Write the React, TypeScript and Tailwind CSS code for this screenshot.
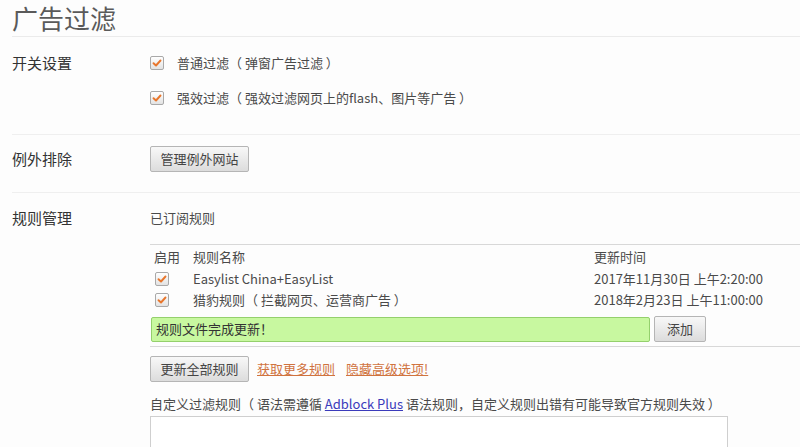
import React from "react";

const font = { fontFamily: '"Noto Sans CJK SC", "Noto Sans", sans-serif' };

function Check() {
    return (
        <span className="inline-flex w-[14px] h-[14px] shrink-0 items-center justify-center rounded-[2px] border border-[#a9a9a9] bg-gradient-to-b from-[#ffffff] to-[#e3e3e3]">
            <svg width="10" height="10" viewBox="0 0 10 10">
                <path d="M1.5 5.2 L4 7.5 L8.5 2.5" fill="none" stroke="#e8762c" strokeWidth="1.9" strokeLinecap="round" strokeLinejoin="round" />
            </svg>
        </span>
    );
}

function Btn({ children, className }: { children: React.ReactNode; className?: string }) {
    return (
        <button className={"h-[26px] rounded-[2px] border border-[#b5b5b5] bg-gradient-to-b from-[#f8f8f8] to-[#dcdcdc] text-[13px] text-[#444] " + (className || "")}>
            {children}
        </button>
    );
}

export default function App() {
    return (
        <div className="w-[800px] h-[447px] overflow-hidden bg-[#fdfdfd] pl-[12px] text-[#333]" style={font}>
            <div className="h-[37px] border-b border-[#ebebeb]">
                <h1 className="pt-[1px] text-[26px] leading-[34px] text-[#5a5a5a]">广告过滤</h1>
            </div>

            <div className="flex h-[98px] border-b border-[#efefef] pt-[13px]">
                <div className="w-[138px] text-[15px] leading-[26px]">开关设置</div>
                <div className="flex flex-col gap-[9px] text-[#4a4a4a]">
                    <label className="flex h-[26px] items-center gap-[13px] text-[13px]">
                        <Check />
                        普通过滤（ 弹窗广告过滤 ）
                    </label>
                    <label className="flex h-[26px] items-center gap-[13px] text-[13px]">
                        <Check />
                        强效过滤（ 强效过滤网页上的flash、图片等广告 ）
                    </label>
                </div>
            </div>

            <div className="flex h-[58px] border-b border-[#efefef] pt-[11px]">
                <div className="w-[138px] text-[15px] leading-[26px]">例外排除</div>
                <Btn className="w-[99px]">管理例外网站</Btn>
            </div>

            <div className="flex pt-[12px]">
                <div className="w-[138px] text-[15px] leading-[26px]">规则管理</div>
                <div className="flex-1 text-[#4a4a4a]">
                    <div className="text-[13px] leading-[26px]">已订阅规则</div>
                    <div className="mt-[13px] border-y border-[#d8d8d8] pb-[4px]">
                        <div className="flex h-[22px] items-center pl-[4px] text-[13px] mt-[1px]">
                            <span className="w-[39px]">启用</span>
                            <span className="w-[401px]">规则名称</span>
                            <span>更新时间</span>
                        </div>
                        <div className="flex h-[21px] items-center pl-[5px] text-[13px]">
                            <span className="w-[38px]"><Check /></span>
                            <span className="w-[401px]">Easylist China+EasyList</span>
                            <span>2017年11月30日 上午2:20:00</span>
                        </div>
                        <div className="flex h-[21px] items-center pl-[5px] text-[13px]">
                            <span className="w-[38px]"><Check /></span>
                            <span className="w-[401px]">猎豹规则（ 拦截网页、运营商广告 ）</span>
                            <span>2018年2月23日 上午11:00:00</span>
                        </div>
                        <div className="mt-[6px] flex items-center gap-[4px] pl-[1px]">
                            <div className="flex h-[25px] w-[499px] items-center rounded-[2px] border border-[#94d06c] bg-[#c8f8a0] pl-[4px] text-[13px] text-[#333]">
                                规则文件完成更新！
                            </div>
                            <Btn className="w-[52px]">添加</Btn>
                        </div>
                    </div>
                    <div className="mt-[9px] flex items-center gap-[8px] text-[13px]">
                        <Btn className="w-[99px]">更新全部规则</Btn>
                        <a className="text-[#d0733f] underline">获取更多规则</a>
                        <a className="ml-[3px] text-[#d0733f] underline">隐藏高级选项!</a>
                    </div>
                    <div className="mt-[12px] text-[13px] leading-[20px]">
                        自定义过滤规则（ 语法需遵循 <a className="text-[#3b3bbb] underline">Adblock Plus</a> 语法规则，自定义规则出错有可能导致官方规则失效 ）
                    </div>
                    <div className="mt-[2px] h-[60px] w-[578px] border border-[#cfcfcf] bg-white"></div>
                </div>
            </div>
        </div>
    );
}
